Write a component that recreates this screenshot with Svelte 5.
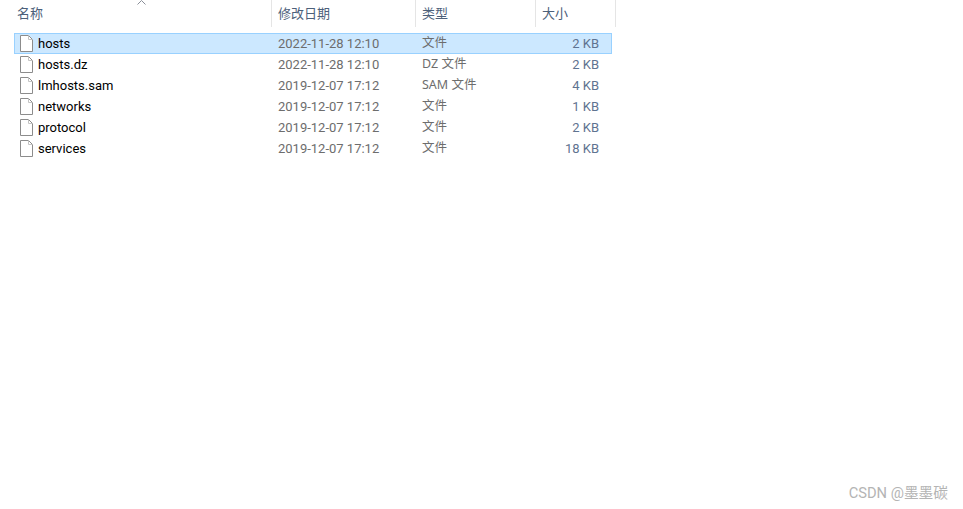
<script>
  const files = [
    { name: 'hosts', date: '2022-11-28 12:10', type: '文件', size: '2 KB', selected: true },
    { name: 'hosts.dz', date: '2022-11-28 12:10', type: 'DZ 文件', size: '2 KB' },
    { name: 'lmhosts.sam', date: '2019-12-07 17:12', type: 'SAM 文件', size: '4 KB' },
    { name: 'networks', date: '2019-12-07 17:12', type: '文件', size: '1 KB' },
    { name: 'protocol', date: '2019-12-07 17:12', type: '文件', size: '2 KB' },
    { name: 'services', date: '2019-12-07 17:12', type: '文件', size: '18 KB' }
  ];
</script>

<div class="page">
  <div class="head">
    <span class="col name-col">名称</span>
    <span class="col date-col">修改日期</span>
    <span class="col type-col">类型</span>
    <span class="col size-col">大小</span>
    <svg class="sort" width="9" height="5" viewBox="0 0 9 5" fill="none" stroke="#8a8f99" stroke-width="1">
      <path d="M0.5 4.5 L4.5 0.5 L8.5 4.5" />
    </svg>
  </div>

  <ul class="list">
    {#each files as file}
      <li class="row" class:selected={file.selected}>
        <span class="name">
          <svg class="icon" width="13" height="17" viewBox="0 0 13 17" fill="#fff" stroke="#8c8c8c" stroke-width="1">
            <path d="M0.5 0.5 H8.5 L12.5 4.5 V16.5 H0.5 Z" />
            <path d="M8.5 0.5 V4.5 H12.5" fill="none" stroke="#c4c4c4" />
          </svg>
          <span>{file.name}</span>
        </span>
        <span class="date">{file.date}</span>
        <span class="type">{file.type}</span>
        <span class="size">{file.size}</span>
      </li>
    {/each}
  </ul>

  <div class="mark">CSDN @墨墨碳</div>
</div>

<style>
  :global(body) {
    margin: 0;
    background: #fff;
  }

  .page {
    position: relative;
    height: 509px;
    overflow: hidden;
    font-family: Roboto, "Noto Sans CJK SC", sans-serif;
    font-size: 13px;
  }

  .head {
    position: relative;
    display: flex;
    height: 27px;
    color: #4c607a;
    line-height: 27px;
  }

  .col {
    box-sizing: border-box;
    padding-left: 6px;
    border-right: 1px solid #e5e5e5;
  }

  .name-col {
    width: 272px;
    padding-left: 17px;
  }

  .date-col {
    width: 144px;
  }

  .type-col {
    width: 120px;
  }

  .size-col {
    width: 80px;
  }

  .sort {
    position: absolute;
    left: 137px;
    top: 0;
  }

  .list {
    list-style: none;
    margin: 6px 0 0 14px;
    padding: 0;
    width: 598px;
  }

  .row {
    box-sizing: border-box;
    display: grid;
    grid-template-columns: 258px 144px 110px 72px;
    align-items: center;
    height: 21px;
    line-height: 19px;
    border: 1px solid transparent;
    color: #6d6d6d;
  }

  .row.selected {
    background: #cce8ff;
    border-color: #99d1ff;
  }

  .name {
    display: flex;
    align-items: center;
    gap: 5px;
    padding-left: 5px;
    color: #000;
  }

  .icon {
    flex: none;
  }

  .date {
    padding-left: 5px;
  }

  .type {
    padding-left: 5px;
    font-family: "Noto Sans", "Noto Sans CJK SC", sans-serif;
    font-size: 12.5px;
    line-height: 17px;
    margin-top: -2px;
  }

  .size {
    text-align: right;
    color: #5f7390;
  }

  .mark {
    position: absolute;
    right: 15px;
    bottom: 7px;
    color: #b4b4b4;
    font-size: 14.7px;
  }
</style>
